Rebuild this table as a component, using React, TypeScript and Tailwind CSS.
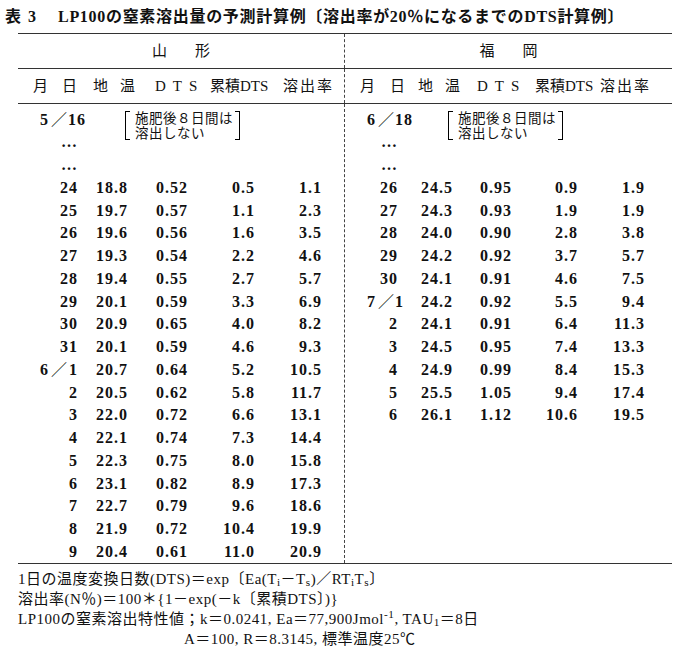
import * as React from 'react';

type Row = {
  month?: string;
  day: string;
  temp?: string;
  dts?: string;
  cum?: string;
  rate?: string;
  note?: boolean;
};

const yamagata: Row[] = [
  { month: '5', day: '16', note: true },
  { day: '…' },
  { day: '…' },
  { day: '24', temp: '18.8', dts: '0.52', cum: '0.5', rate: '1.1' },
  { day: '25', temp: '19.7', dts: '0.57', cum: '1.1', rate: '2.3' },
  { day: '26', temp: '19.6', dts: '0.56', cum: '1.6', rate: '3.5' },
  { day: '27', temp: '19.3', dts: '0.54', cum: '2.2', rate: '4.6' },
  { day: '28', temp: '19.4', dts: '0.55', cum: '2.7', rate: '5.7' },
  { day: '29', temp: '20.1', dts: '0.59', cum: '3.3', rate: '6.9' },
  { day: '30', temp: '20.9', dts: '0.65', cum: '4.0', rate: '8.2' },
  { day: '31', temp: '20.1', dts: '0.59', cum: '4.6', rate: '9.3' },
  { month: '6', day: '1', temp: '20.7', dts: '0.64', cum: '5.2', rate: '10.5' },
  { day: '2', temp: '20.5', dts: '0.62', cum: '5.8', rate: '11.7' },
  { day: '3', temp: '22.0', dts: '0.72', cum: '6.6', rate: '13.1' },
  { day: '4', temp: '22.1', dts: '0.74', cum: '7.3', rate: '14.4' },
  { day: '5', temp: '22.3', dts: '0.75', cum: '8.0', rate: '15.8' },
  { day: '6', temp: '23.1', dts: '0.82', cum: '8.9', rate: '17.3' },
  { day: '7', temp: '22.7', dts: '0.79', cum: '9.6', rate: '18.6' },
  { day: '8', temp: '21.9', dts: '0.72', cum: '10.4', rate: '19.9' },
  { day: '9', temp: '20.4', dts: '0.61', cum: '11.0', rate: '20.9' },
];

const fukuoka: Row[] = [
  { month: '6', day: '18', note: true },
  { day: '…' },
  { day: '…' },
  { day: '26', temp: '24.5', dts: '0.95', cum: '0.9', rate: '1.9' },
  { day: '27', temp: '24.3', dts: '0.93', cum: '1.9', rate: '1.9' },
  { day: '28', temp: '24.0', dts: '0.90', cum: '2.8', rate: '3.8' },
  { day: '29', temp: '24.2', dts: '0.92', cum: '3.7', rate: '5.7' },
  { day: '30', temp: '24.1', dts: '0.91', cum: '4.6', rate: '7.5' },
  { month: '7', day: '1', temp: '24.2', dts: '0.92', cum: '5.5', rate: '9.4' },
  { day: '2', temp: '24.1', dts: '0.91', cum: '6.4', rate: '11.3' },
  { day: '3', temp: '24.5', dts: '0.95', cum: '7.4', rate: '13.3' },
  { day: '4', temp: '24.9', dts: '0.99', cum: '8.4', rate: '15.3' },
  { day: '5', temp: '25.5', dts: '1.05', cum: '9.4', rate: '17.4' },
  { day: '6', temp: '26.1', dts: '1.12', cum: '10.6', rate: '19.5' },
];

function Note({ left }: { left: string }) {
  return (
    <div className={`absolute top-[3px] flex items-start ${left}`}>
      <div className="h-[29px] w-[5px] border-l-[1.5px] border-t border-b border-black" />
      <div className="ml-[5px] w-[100px] text-[13.5px] leading-[15px] font-normal tracking-[0.5px]">
        <div>施肥後８日間は</div>
        <div>溶出しない</div>
      </div>
      <div className="h-[29px] w-[5px] border-r-[1.5px] border-t border-b border-black" />
    </div>
  );
}

function Body({ rows, cols, noteLeft }: { rows: Row[]; cols: string; noteLeft: string }) {
  return (
    <div className="pt-[3.5px]">
      {rows.map((r, i) => (
        <div key={i} className={`relative grid h-[22.75px] items-center ${cols}`}>
          <div className="flex items-center">
            {r.month ? (
              <>
                <span className="pl-[22px]">{r.month}</span>
                <span className="ml-[2px] font-normal">／</span>
              </>
            ) : null}
            <span className="flex-1 text-right">{r.day}</span>
          </div>
          <div className="text-right">{r.temp}</div>
          <div className="text-right">{r.dts}</div>
          <div className="text-right">{r.cum}</div>
          <div className="text-right">{r.rate}</div>
          <div />
          {r.note && <Note left={noteLeft} />}
        </div>
      ))}
    </div>
  );
}

function HeadLabels({ cols }: { cols: string }) {
  return (
    <div className={`grid h-[34px] items-center ${cols}`}>
      <div />
      <div>月</div>
      <div>日</div>
      <div>地</div>
      <div>温</div>
      <div className="font-['Liberation_Serif',serif] tracking-[7px]">DTS</div>
      <div>
        累積<span className="font-['Liberation_Serif',serif]">DTS</span>
      </div>
      <div className="tracking-[2px]">溶出率</div>
    </div>
  );
}

export default function App() {
  return (
    <div className="h-[647px] w-[690px] overflow-hidden bg-white text-[#111] font-['Liberation_Serif','Noto_Sans_CJK_JP',serif]">
      <div className="flex h-[33px] items-center pl-[5px] text-[16px] font-bold">
        <span>表</span>
        <span className="ml-[7px]">3</span>
        <span className="ml-[22px] tracking-[0.7px]">
          LP100の窒素溶出量の予測計算例〔溶出率が20％になるまでのDTS計算例〕
        </span>
      </div>

      <div className="mx-[18px] w-[654px]">
        <div className="grid grid-cols-2 border-t-[1.5px] border-b-[1.5px] border-[#333] text-[15px]">
          <div className="flex h-[34px] items-center justify-center gap-[28px] border-r border-dashed border-[#444]">
            <span>山</span>
            <span>形</span>
          </div>
          <div className="flex h-[34px] items-center justify-center gap-[28px]">
            <span>福</span>
            <span>岡</span>
          </div>
        </div>
        <div className="grid grid-cols-2 border-b-[1.5px] border-[#333] text-[15px]">
          <div className="border-r border-dashed border-[#444]">
            <HeadLabels cols="grid-cols-[15px_29px_31px_27px_35px_55px_73px_1fr]" />
          </div>
          <div>
            <HeadLabels cols="grid-cols-[15px_30px_28px_27px_32px_58px_65px_1fr]" />
          </div>
        </div>
        <div className="grid grid-cols-2 border-b-[1.5px] border-[#333] text-[16px] font-bold tracking-[1px]">
          <div className="border-r border-dashed border-[#444]">
            <Body rows={yamagata} cols="grid-cols-[60px_50px_60px_67px_67px_1fr]" noteLeft="left-[107px]" />
          </div>
          <div>
            <Body rows={fukuoka} cols="grid-cols-[53px_55px_59px_66px_67px_1fr]" noteLeft="left-[103px]" />
          </div>
        </div>
      </div>

      <div className="mt-[5px] pl-[18px] text-[15px] leading-[20px] tracking-[0.5px]">
        <div>
          1日の温度変換日数(DTS)＝exp〔Ea(T<sub>i</sub>－T<sub>s</sub>)／RT<sub>i</sub>T<sub>s</sub>〕
        </div>
        <div>溶出率(N％)＝100＊{'{'}1－exp(－k〔累積DTS〕){'}'}</div>
        <div>
          LP100の窒素溶出特性値；k＝0.0241, Ea＝77,900Jmol<sup>-1</sup>, TAU<sub>1</sub>＝8日
        </div>
        <div className="pl-[166px]">A＝100, R＝8.3145, 標準温度25℃</div>
      </div>
    </div>
  );
}
